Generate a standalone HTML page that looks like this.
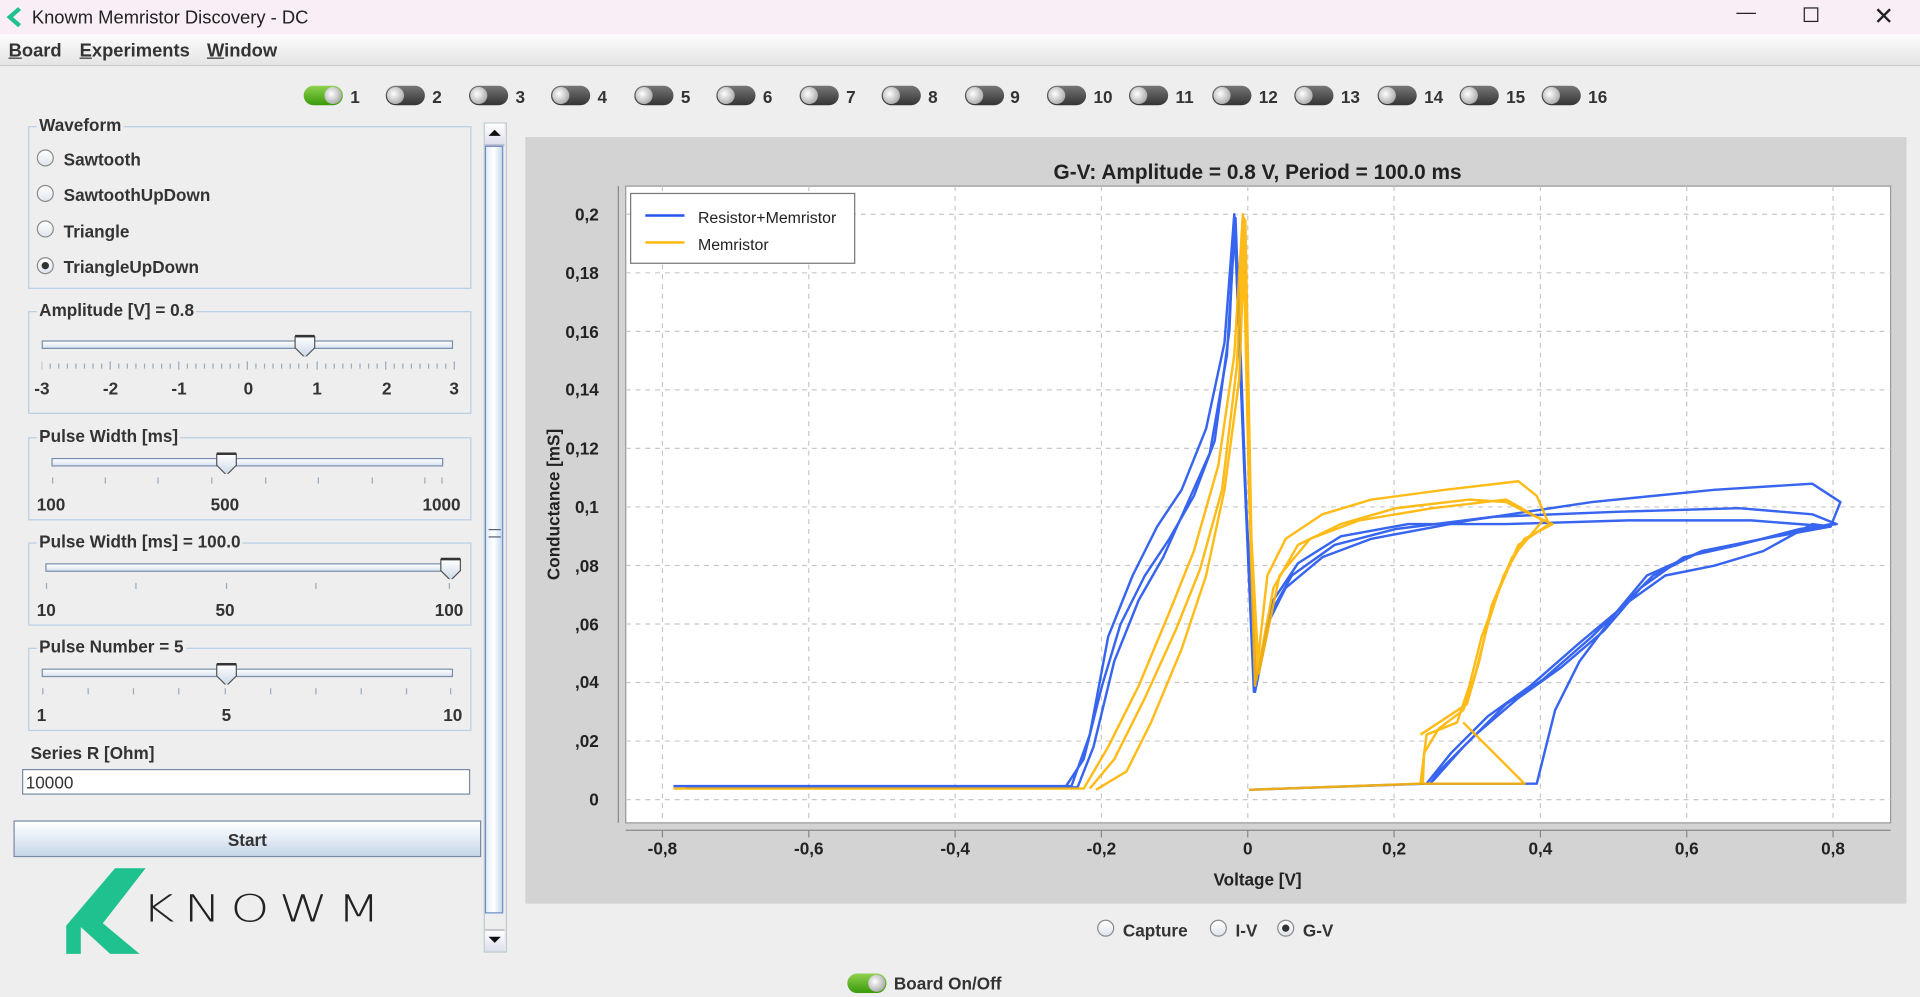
<!DOCTYPE html>
<html><head><meta charset="utf-8"><style>
html,body{margin:0;padding:0;width:1920px;height:997px;overflow:hidden;background:#eeeeee}
#w{position:absolute;left:0;top:0;width:1568px;height:814px;transform:scale(1.22449);transform-origin:0 0;font-family:"Liberation Sans",Arial,sans-serif;color:#333;background:#eeeeee}
.a{position:absolute}
.b{font-weight:bold;font-size:14px}
.grp{position:absolute;border:1px solid #b8cfe5}
.grp .t{position:absolute;top:-10px;left:6px;background:#eee;padding:0 2px;font-weight:bold;font-size:14px;color:#333}
.rad{position:absolute;width:12px;height:12px;border:1px solid #8b8b8b;border-radius:50%;background:linear-gradient(#fff,#dfe6ee)}
.rad.on::after{content:"";position:absolute;left:3px;top:3px;width:6px;height:6px;border-radius:50%;background:#333}
.track{position:absolute;height:5px;border:1px solid #7a8fae;background:linear-gradient(#fff,#d9e3ef)}
.thumb{position:absolute;width:18px;height:18px}
.tog{position:absolute;width:32px;height:16px;border-radius:8px;background:linear-gradient(#777,#333)}
.tog::after{content:"";position:absolute;left:1px;top:1px;width:14px;height:14px;border-radius:50%;background:radial-gradient(circle at 40% 40%,#fff,#bbb 60%,#888)}
.tog.on{background:linear-gradient(#8fd14f,#3a9a0a)}
.tog.on::after{left:17px}
</style></head><body><div id="w">
<div class="a" style="left:0;top:0;width:1568px;height:28px;background:#f9eef6"></div>
<svg class="a" style="left:4px;top:6px" width="16" height="16"><path d="M12 1 L4 8 L12 15" stroke="#1fc28f" stroke-width="3.5" fill="none"/></svg>
<div class="a" style="left:26px;top:6px;font-size:15px;color:#222">Knowm Memristor Discovery - DC</div>
<div class="a" style="left:1418px;top:2px;font-size:16px;color:#222">—</div>
<div class="a" style="left:1473px;top:6px;width:10px;height:10px;border:1.3px solid #222"></div>
<div class="a" style="left:1530px;top:1px;font-size:20px;color:#222">✕</div>
<div class="a" style="left:0;top:28px;width:1568px;height:25px;background:linear-gradient(#fdfdfd,#e4e4e4);border-bottom:1px solid #ccc"></div>
<div class="a b" style="left:7px;top:33px;font-size:15px"><u>B</u>oard</div>
<div class="a b" style="left:65px;top:33px;font-size:15px"><u>E</u>xperiments</div>
<div class="a b" style="left:169px;top:33px;font-size:15px"><u>W</u>indow</div>

<div class="tog on" style="left:248px;top:70px"></div><div class="a b" style="left:286px;top:71px">1</div>
<div class="tog" style="left:315px;top:70px"></div><div class="a b" style="left:353px;top:71px">2</div>
<div class="tog" style="left:383px;top:70px"></div><div class="a b" style="left:421px;top:71px">3</div>
<div class="tog" style="left:450px;top:70px"></div><div class="a b" style="left:488px;top:71px">4</div>
<div class="tog" style="left:518px;top:70px"></div><div class="a b" style="left:556px;top:71px">5</div>
<div class="tog" style="left:585px;top:70px"></div><div class="a b" style="left:623px;top:71px">6</div>
<div class="tog" style="left:653px;top:70px"></div><div class="a b" style="left:691px;top:71px">7</div>
<div class="tog" style="left:720px;top:70px"></div><div class="a b" style="left:758px;top:71px">8</div>
<div class="tog" style="left:788px;top:70px"></div><div class="a b" style="left:825px;top:71px">9</div>
<div class="tog" style="left:855px;top:70px"></div><div class="a b" style="left:893px;top:71px">10</div>
<div class="tog" style="left:922px;top:70px"></div><div class="a b" style="left:960px;top:71px">11</div>
<div class="tog" style="left:990px;top:70px"></div><div class="a b" style="left:1028px;top:71px">12</div>
<div class="tog" style="left:1057px;top:70px"></div><div class="a b" style="left:1095px;top:71px">13</div>
<div class="tog" style="left:1125px;top:70px"></div><div class="a b" style="left:1163px;top:71px">14</div>
<div class="tog" style="left:1192px;top:70px"></div><div class="a b" style="left:1230px;top:71px">15</div>
<div class="tog" style="left:1259px;top:70px"></div><div class="a b" style="left:1297px;top:71px">16</div>

<div class="grp" style="left:23px;top:103px;width:360px;height:131px"><div class="t">Waveform</div></div>
<div class="rad" style="left:30px;top:122px"></div><div class="a b" style="left:52px;top:122px">Sawtooth</div>
<div class="rad" style="left:30px;top:151px"></div><div class="a b" style="left:52px;top:151px">SawtoothUpDown</div>
<div class="rad" style="left:30px;top:180px"></div><div class="a b" style="left:52px;top:181px">Triangle</div>
<div class="rad on" style="left:30px;top:210px"></div><div class="a b" style="left:52px;top:210px">TriangleUpDown</div>

<svg width="0" height="0" style="position:absolute"><defs><linearGradient id="tg" x1="0" x2="0" y1="0" y2="1"><stop offset="0" stop-color="#fff"/><stop offset="1" stop-color="#c9d7e8"/></linearGradient></defs></svg>

<div class="grp" style="left:23px;top:254px;width:360px;height:82px"><div class="t">Amplitude [V] = 0.8</div></div>
<div class="track" style="left:34px;top:278px;width:334px"></div>
<svg class="thumb" style="left:240px;top:273px" width="18" height="20"><path d="M1 2 H17 V11 L9 19 L1 11 Z" fill="url(#tg)" stroke="#555"/><path d="M1 1.5 H17" stroke="#333" stroke-width="2"/></svg>
<svg class="a" style="left:34px;top:295px" width="340" height="8"><g stroke="#9ab" stroke-width="1">
<path d="M0 0v7M56 0v7M112 0v7M168 0v7M225 0v7M281 0v7M337 0v7"/>
<path d="M7 2v4M14 2v4M21 2v4M28 2v4M35 2v4M42 2v4M49 2v4M63 2v4M70 2v4M77 2v4M84 2v4M91 2v4M98 2v4M105 2v4M119 2v4M126 2v4M133 2v4M140 2v4M147 2v4M154 2v4M161 2v4M175 2v4M182 2v4M189 2v4M196 2v4M203 2v4M210 2v4M217 2v4M232 2v4M239 2v4M246 2v4M253 2v4M260 2v4M267 2v4M274 2v4M288 2v4M295 2v4M302 2v4M309 2v4M316 2v4M323 2v4M330 2v4"/></g></svg>
<div class="a b" style="left:28px;top:309px">-3</div><div class="a b" style="left:84px;top:309px">-2</div><div class="a b" style="left:140px;top:309px">-1</div><div class="a b" style="left:199px;top:309px">0</div><div class="a b" style="left:255px;top:309px">1</div><div class="a b" style="left:312px;top:309px">2</div><div class="a b" style="left:367px;top:309px">3</div>

<div class="grp" style="left:23px;top:357px;width:360px;height:66px"><div class="t">Pulse Width [ms]</div></div>
<div class="track" style="left:42px;top:374px;width:318px"></div>
<svg class="thumb" style="left:176px;top:369px" width="18" height="20"><path d="M1 2 H17 V11 L9 19 L1 11 Z" fill="url(#tg)" stroke="#555"/><path d="M1 1.5 H17" stroke="#333" stroke-width="2"/></svg>
<svg class="a" style="left:42px;top:390px" width="330" height="6"><path d="M1 0v5M44 0v5M87 0v5M131 0v5M175 0v5M218 0v5M262 0v5M305 0v5M319 0v5" stroke="#9ab"/></svg>
<div class="a b" style="left:30px;top:404px">100</div><div class="a b" style="left:172px;top:404px">500</div><div class="a b" style="left:345px;top:404px">1000</div>

<div class="grp" style="left:23px;top:443px;width:360px;height:66px"><div class="t">Pulse Width [ms] = 100.0</div></div>
<div class="track" style="left:37px;top:460px;width:330px"></div>
<svg class="thumb" style="left:359px;top:455px" width="18" height="20"><path d="M1 2 H17 V11 L9 19 L1 11 Z" fill="url(#tg)" stroke="#555"/><path d="M1 1.5 H17" stroke="#333" stroke-width="2"/></svg>
<svg class="a" style="left:37px;top:476px" width="340" height="6"><path d="M1 0v5M74 0v5M148 0v5M221 0v5M330 0v5" stroke="#9ab"/></svg>
<div class="a b" style="left:30px;top:490px">10</div><div class="a b" style="left:176px;top:490px">50</div><div class="a b" style="left:355px;top:490px">100</div>

<div class="grp" style="left:23px;top:529px;width:360px;height:66px"><div class="t">Pulse Number = 5</div></div>
<div class="track" style="left:34px;top:546px;width:334px"></div>
<svg class="thumb" style="left:176px;top:541px" width="18" height="20"><path d="M1 2 H17 V11 L9 19 L1 11 Z" fill="url(#tg)" stroke="#555"/><path d="M1 1.5 H17" stroke="#333" stroke-width="2"/></svg>
<svg class="a" style="left:34px;top:562px" width="340" height="6"><path d="M1 0v5M38 0v5M75 0v5M112 0v5M150 0v5M187 0v5M224 0v5M261 0v5M298 0v5M334 0v5" stroke="#9ab"/></svg>
<div class="a b" style="left:30px;top:576px">1</div><div class="a b" style="left:181px;top:576px">5</div><div class="a b" style="left:362px;top:576px">10</div>

<div class="a b" style="left:25px;top:607px">Series R [Ohm]</div>
<div class="a" style="left:18px;top:628px;width:366px;height:21px;background:#fff;border:1px solid #7a8aa4;font-size:14px;line-height:21px;padding-left:2px;box-sizing:border-box">10000</div>
<div class="a b" style="left:11px;top:670px;width:382px;height:30px;border:1px solid #7a8aa4;background:linear-gradient(#fff,#e9f0f8 40%,#c5d5e8);text-align:center;line-height:30px;box-sizing:border-box">Start</div>

<svg class="a" style="left:54px;top:709px" width="90" height="72"><path d="M0 47 L40 0 H65 L30 45 L60 70 H36 L12 48 V70 H0 Z" fill="#1fc28f"/></svg>
<div class="a" style="left:116px;top:728px;font-size:36px;letter-spacing:7px;color:#222;line-height:36px;font-weight:200;font-family:'DejaVu Sans ExtraLight','DejaVu Sans','Liberation Sans',sans-serif;transform:scale(1.12,0.85);transform-origin:0 0">KNOWM</div>

<div class="a" style="left:395px;top:100px;width:17px;height:676px;background:#eee;border:1px solid #bcc"></div>
<div class="a" style="left:396px;top:101px;width:16px;height:17px;background:linear-gradient(#fff,#dde);border-bottom:1px solid #aab"></div>
<svg class="a" style="left:399px;top:105px" width="10" height="8"><path d="M0 6 L5 1 L10 6Z" fill="#111"/></svg>
<div class="a" style="left:396px;top:119px;width:15px;height:627px;border:1px solid #6f8fc9;background:linear-gradient(90deg,#e6eef8,#fff 50%,#c7d7ee);box-sizing:border-box"></div>
<div class="a" style="left:399px;top:432px;width:10px;height:5px;border-top:1px solid #567;border-bottom:1px solid #567"></div>
<div class="a" style="left:396px;top:759px;width:16px;height:17px;background:linear-gradient(#fff,#dde);border-top:1px solid #aab"></div>
<svg class="a" style="left:399px;top:764px" width="10" height="8"><path d="M0 1 L5 6 L10 1Z" fill="#111"/></svg>

<div class="a" style="left:429px;top:112px;width:1128px;height:626px;background:#d3d3d3"></div>
<div class="a b" style="left:429px;top:131px;width:1196px;text-align:center;font-size:17px;color:#222">G-V: Amplitude = 0.8 V, Period = 100.0 ms</div>
<svg class="a" style="left:429px;top:112px" width="1128" height="626" font-family="Liberation Sans, Arial, sans-serif" font-weight="bold" font-size="14" fill="#222">
<rect x="82" y="40" width="1033" height="520" fill="#fff" stroke="#999"/>
<g stroke="#c8c8c8" stroke-dasharray="4 4" stroke-width="1">
<path d="M112 40V560M231.5 40V560M351 40V560M470.5 40V560M590 40V560M709.5 40V560M829 40V560M948.5 40V560M1068 40V560"/>
<path d="M82 541H1115M82 493.2H1115M82 445.4H1115M82 397.6H1115M82 349.8H1115M82 302H1115M82 254.2H1115M82 206.4H1115M82 158.6H1115M82 110.8H1115M82 63H1115"/>
</g>
<path d="M82 566H1115" stroke="#888"/>
<g stroke="#888"><path d="M112 566v6M231.5 566v6M351 566v6M470.5 566v6M590 566v6M709.5 566v6M829 566v6M948.5 566v6M1068 566v6"/></g>
<path d="M76 40V560" stroke="#888"/>
<g text-anchor="middle">
<text x="112" y="586">-0,8</text><text x="231.5" y="586">-0,6</text><text x="351" y="586">-0,4</text><text x="470.5" y="586">-0,2</text><text x="590" y="586">0</text><text x="709.5" y="586">0,2</text><text x="829" y="586">0,4</text><text x="948.5" y="586">0,6</text><text x="1068" y="586">0,8</text>
<text x="598" y="611">Voltage [V]</text>
</g>
<g text-anchor="end">
<text x="60" y="546">0</text><text x="60" y="498">,02</text><text x="60" y="450">,04</text><text x="60" y="403">,06</text><text x="60" y="355">,08</text><text x="60" y="307">0,1</text><text x="60" y="259">0,12</text><text x="60" y="211">0,14</text><text x="60" y="164">0,16</text><text x="60" y="116">0,18</text><text x="60" y="68">0,2</text>
</g>
<text transform="translate(28 300) rotate(-90)" text-anchor="middle">Conductance [mS]</text>
<g transform="translate(-429 -112)" fill="none" stroke-width="2" stroke-linejoin="round">
<g stroke="#2255ee" opacity="0.9">
<polyline points="550,642 875,642 890,600 905,520 925,470 945,430 965,400 985,350 1000,280 1008,175 1017,400 1025,565 1035,510 1050,480 1080,455 1120,440 1200,425 1300,410 1400,400 1480,395 1503,410 1495,430 1440,440 1390,450 1345,470 1320,500 1290,525 1250,560 1215,585 1185,615 1165,640 1020,645"/>
<polyline points="560,643 880,643 893,610 910,540 930,490 950,455 968,415 988,370 1002,290 1009,178 1018,420 1026,560 1038,500 1055,470 1090,445 1140,432 1220,422 1320,418 1420,415 1480,420 1500,428 1470,432 1420,445 1375,455 1340,480 1310,515 1275,545 1240,570 1205,600 1175,630 1168,640"/>
<polyline points="870,643 885,620 900,560 915,510 935,470 955,440 975,405 992,360 1004,270 1008,176 1016,380 1024,565 1040,490 1060,460 1095,438 1150,428 1230,428 1330,425 1430,425 1495,430 1480,428 1440,450 1400,462 1360,470 1325,495 1300,520 1260,555 1230,575 1195,610 1170,638"/>
<polyline points="1165,640 1255,640 1270,580 1290,540 1320,500 1350,470 1390,450 1440,440 1495,428"/>
</g>
<g stroke="#ffb400" opacity="0.9">
<polyline points="550,644 885,644 905,610 930,560 955,500 975,450 995,380 1008,290 1015,175 1020,400 1025,560 1035,470 1050,440 1080,420 1120,408 1180,400 1240,393 1255,405 1265,428 1240,445 1225,480 1210,520 1200,560 1190,590 1165,600 1160,640 1020,645"/>
<polyline points="890,644 910,620 935,570 960,515 980,465 998,400 1010,300 1016,178 1021,420 1026,555 1040,480 1060,445 1095,428 1140,415 1200,408 1230,410 1250,420 1268,428 1245,440 1228,470 1215,510 1205,550 1195,580 1175,595 1163,615 1162,640"/>
<polyline points="895,645 920,630 940,590 965,530 985,470 1000,400 1012,310 1017,180 1022,440 1028,550 1045,470 1070,440 1110,425 1170,415 1230,408 1260,425 1235,455 1218,495 1208,540 1198,575 1160,600"/>
<polyline points="1195,590 1245,640 1160,640"/>
</g>
</g>
<rect x="86" y="46" width="183" height="57" fill="#fff" stroke="#777"/>
<path d="M98 64H130" stroke="#2255ee" stroke-width="2"/><path d="M98 86H130" stroke="#ffb400" stroke-width="2"/>
<text x="141" y="70" font-weight="normal" font-size="13">Resistor+Memristor</text>
<text x="141" y="92" font-weight="normal" font-size="13">Memristor</text>
</svg>

<div class="rad" style="left:896px;top:751px"></div><div class="a b" style="left:917px;top:752px">Capture</div>
<div class="rad" style="left:988px;top:751px"></div><div class="a b" style="left:1009px;top:752px">I-V</div>
<div class="rad on" style="left:1043px;top:751px"></div><div class="a b" style="left:1064px;top:752px">G-V</div>
<div class="tog on" style="left:692px;top:795px"></div><div class="a b" style="left:730px;top:795px">Board On/Off</div>
</div></body></html>
